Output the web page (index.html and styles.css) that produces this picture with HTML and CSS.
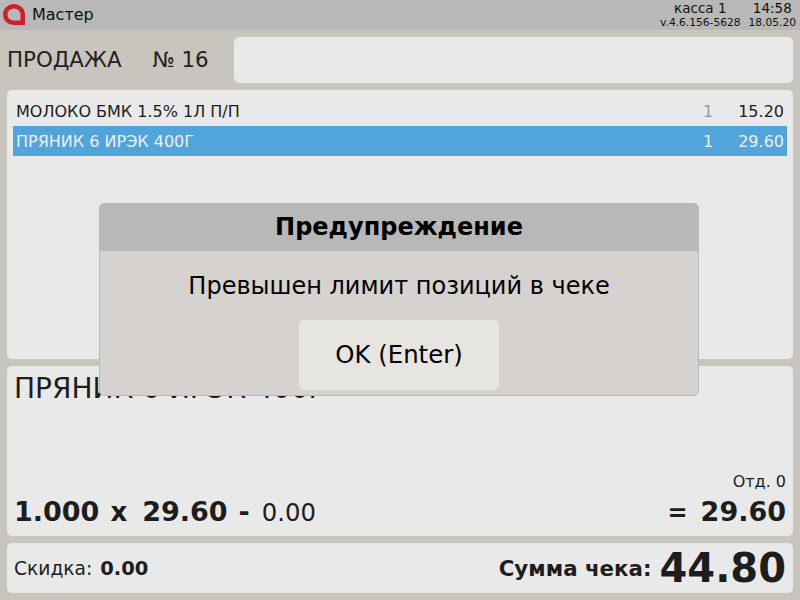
FILE: index.html
```html
<!DOCTYPE html>
<html lang="ru">
<head>
<meta charset="utf-8">
<title>Мастер</title>
<link rel="stylesheet" href="styles.css">
</head>
<body>
<div class="screen">
  <header class="topbar">
    <svg class="logo" viewBox="0 0 22 21" width="22" height="21"><path d="M11 2.250A8.750 8.250 0 0 0 2.250 10.500A8.250 8.250 0 0 0 10.500 18.750H19.750V10.500A8.750 8.250 0 0 0 11 2.250Z" fill="none" stroke="#cf1f2e" stroke-width="4.500"/></svg>
    <span class="app-name">Мастер</span>
    <div class="status">
      <div class="status-col status-version"><span class="status-top">касса 1</span><span class="status-sub">v.4.6.156-5628</span></div>
      <div class="status-col status-clock"><span class="status-top">14:58</span><span class="status-sub">18.05.20</span></div>
    </div>
  </header>
  <main class="content">
    <section class="sale-row">
      <div class="sale-title"><span>ПРОДАЖА</span><span>№ 16</span></div>
      <div class="panel sale-info"></div>
    </section>
    <section class="panel receipt">
      <div class="line"><span class="line-name">МОЛОКО БМК 1.5% 1Л П/П</span><span class="line-qty">1</span><span class="line-sum">15.20</span></div>
      <div class="line line-active"><span class="line-name">ПРЯНИК 6 ИРЭК 400Г</span><span class="line-qty">1</span><span class="line-sum">29.60</span></div>
    </section>
    <section class="panel detail">
      <div class="detail-name">ПРЯНИК 6 ИРЭК 400Г</div>
      <div class="detail-dept">Отд. 0</div>
      <div class="detail-calc">
        <span class="calc-strong">1.000</span><span class="calc-op calc-x">x</span><span class="calc-strong">29.60</span><span class="calc-strong">-</span><span class="calc-discount">0.00</span>
        <span class="calc-op calc-eq">=</span><span class="calc-strong">29.60</span>
      </div>
    </section>
    <section class="panel totals">
      <div class="discount">Скидка: <b>0.00</b></div>
      <div class="sum"><span class="sum-label">Сумма чека:</span><span class="sum-value">44.80</span></div>
    </section>
  </main>
  <div class="dialog">
    <div class="dialog-title">Предупреждение</div>
    <div class="dialog-text">Превышен лимит позиций в чеке</div>
    <div class="dialog-actions"><button class="dialog-btn" type="button">OK (Enter)</button></div>
  </div>
</div>
</body>
</html>
```
FILE: styles.css
```css
* { box-sizing: border-box; }
html, body { margin: 0; padding: 0; }
body { font-family: "DejaVu Sans", sans-serif; color: #1d1d1d; background: #c8c5bf; }
.screen { position: relative; width: 800px; height: 600px; overflow: hidden; display: flex; flex-direction: column; }

.topbar { height: 30px; background: #b8b8b8; display: flex; align-items: center; padding: 0 0 0 3px; color: #111; }
.logo { flex: none; margin-right: 7px; margin-bottom: 1px; }
.app-name { font-size: 16px; margin-bottom: 2px; }
.status { margin-left: auto; display: flex; gap: 8px; padding-right: 4px; height: 30px; }
.status-col { display: flex; flex-direction: column; align-items: center; }
.status-top { font-size: 13.5px; line-height: 16px; }
.status-sub { font-size: 10.67px; line-height: 12px; margin-top: 1px; }

.content { flex: 1; padding: 7px; display: flex; flex-direction: column; gap: 7px; }
.panel { background: #e9e9e9; border-radius: 5px; }

.sale-row { display: flex; height: 46px; }
.sale-title { width: 227px; display: flex; align-items: center; gap: 31px; padding-bottom: 2px; font-size: 21.33px; color: #222; }
.sale-info { flex: 1; }

.receipt { height: 269px; padding: 6px; display: flex; flex-direction: column; }
.line { height: 30px; display: flex; align-items: center; font-size: 16px; padding: 0 3px; }
.line-name { flex: 1; }
.line-qty { color: #999; width: 20px; }
.line-sum { width: 61px; text-align: right; }
.line-active { background: #51a5db; color: #eee; }
.line-active .line-qty { color: #eee; }

.detail { height: 170px; padding: 0 7px; display: flex; flex-direction: column; }
.detail-name { font-size: 28px; line-height: 46px; }
.detail-dept { margin-top: auto; text-align: right; font-size: 16px; line-height: 18px; }
.detail-calc { display: flex; align-items: baseline; gap: 11px; height: 38px; margin-top: 2px; margin-bottom: 5px; line-height: 38px; }
.calc-strong { font-size: 27px; font-weight: bold; }
.calc-op { font-size: 24px; font-weight: bold; }
.calc-x { font-size: 26px; margin-right: 4px; }
.calc-eq { margin-left: auto; margin-right: 2px; }
.calc-discount { font-size: 24.3px; margin-left: 1px; }

.totals { height: 50px; display: flex; align-items: center; justify-content: space-between; padding: 0 7px; }
.discount { font-size: 18.67px; }
.discount b { margin-left: 2px; font-size: 19.5px; }
.sum { display: flex; align-items: center; gap: 8px; }
.sum-label { font-size: 21.33px; font-weight: bold; }
.sum-value { font-size: 40px; font-weight: bold; }

.dialog { position: absolute; left: 99px; top: 203px; width: 600px; height: 193px; background: #d5d2cf; border: 1px solid #b8b8b8; border-radius: 5px; color: #000; overflow: hidden; display: flex; flex-direction: column; }
.dialog-title { height: 47px; background: #b8b8b8; text-align: center; font-size: 24px; font-weight: bold; line-height: 47px; }
.dialog-text { text-align: center; font-size: 24px; line-height: 26px; margin-top: 22px; }
.dialog-actions { display: flex; justify-content: center; margin-top: 21px; }
.dialog-btn { width: 200px; height: 70px; border: 0; border-radius: 5px; padding: 0 0 2px; background: #e6e5e2; color: #000; font: 24.4px "DejaVu Sans", sans-serif; }
```
